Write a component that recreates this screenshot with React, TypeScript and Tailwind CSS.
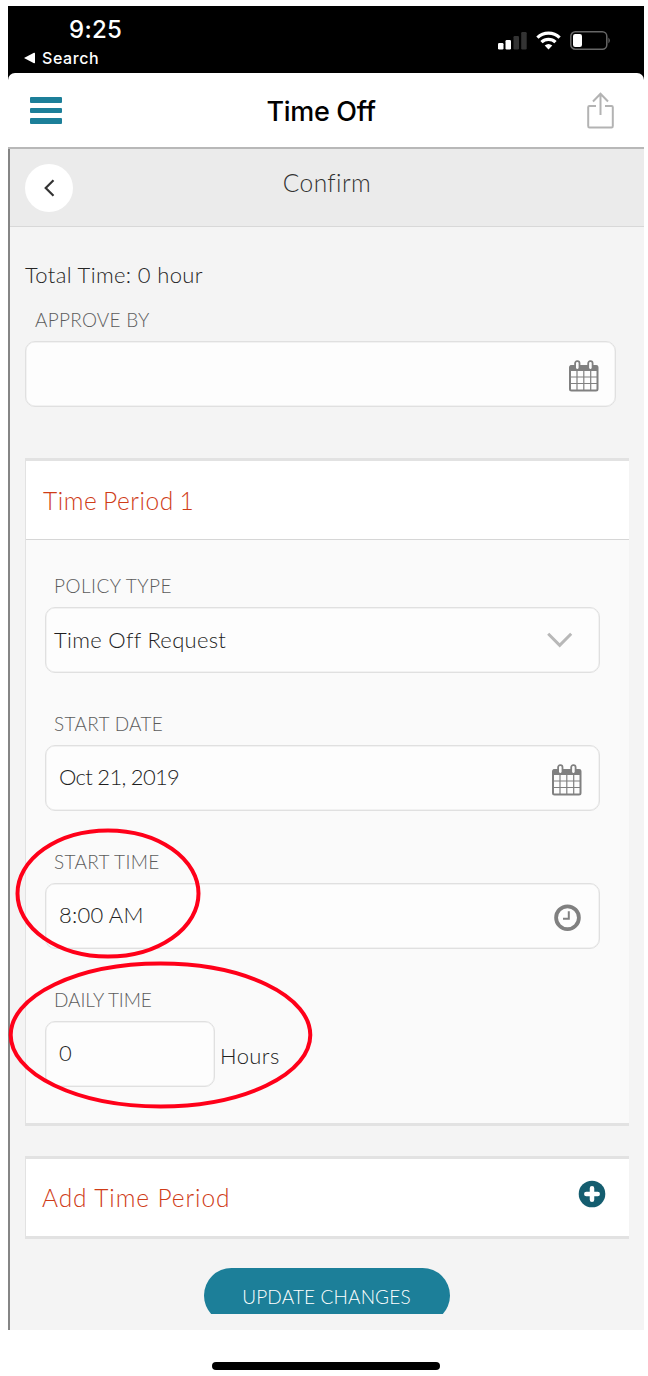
import React from "react";

const light = "font-['Lato','Open_Sans',sans-serif] font-light whitespace-nowrap";
const system = "font-['Inter','Liberation_Sans',sans-serif] font-medium whitespace-nowrap";

function Calendar() {
  return (
    <svg width="30" height="32" viewBox="0 0 30 32" fill="none">
      <rect x="1" y="6" width="27.500" height="24.5" rx="1.5" fill="#fdfdfd" stroke="#808080" strokeWidth="2" />
      <path d="M1 5.5h27.500v5.5H1z" fill="#808080" />
      <path d="M8 11v19M14.8 11v19M21.7 11v19M2 17h26M2 23.5h26" stroke="#808080" strokeWidth="1.2" />
      <rect x="6.1" y="1.2" width="4.4" height="8.6" rx="2" fill="#fdfdfd" stroke="#808080" strokeWidth="1.8" />
      <rect x="19.2" y="1.2" width="4.4" height="8.6" rx="2" fill="#fdfdfd" stroke="#808080" strokeWidth="1.8" />
    </svg>
  );
}

function Clock() {
  return (
    <svg width="28" height="28" viewBox="0 0 28 28" fill="none" stroke="#808080">
      <circle cx="13.5" cy="13.700" r="11.4" strokeWidth="3.8" />
      <path d="M14.8 7.2v7.600H9" strokeWidth="2" />
    </svg>
  );
}

function Chevron() {
  return (
    <svg width="26" height="16" viewBox="0 0 26 16" fill="none">
      <path d="M1.2 1.8 12.7 13.3 24.200 1.8" stroke="#b8b8b8" strokeWidth="3" />
    </svg>
  );
}

function Label({ children, spacing }: { children: string; spacing: string }) {
  return <div className={`${light} h-[21px] pl-[9px] text-[19px] leading-[20px] text-[#5c5c5c] ${spacing}`}>{children}</div>;
}

function Field({ children, className }: { children?: React.ReactNode; className: string }) {
  return (
    <div className={`flex h-[66px] items-center justify-between rounded-[10px] border border-[#e0e0e0] bg-[#fdfdfd] shadow-[inset_0_0_0_0.5px_#e8e8e8] ${className}`}>
      {children}
    </div>
  );
}

function Value({ children, spacing }: { children: string; spacing: string }) {
  return <span className={`${light} text-[22px] leading-6 text-[#1f1f1f] ${spacing}`}>{children}</span>;
}

function StatusBar() {
  return (
    <div className="flex h-[67px] justify-between text-white">
      <div className="pt-[11px]">
        <div className={`${system} pl-[61px] text-[24px] leading-[26px] tracking-[0.3px]`}>9:25</div>
        <div className="flex items-center gap-[7px] pt-[5px] pl-4">
          <svg width="11" height="12" viewBox="0 0 11 12">
            <path d="M0 6 10 .8Q11 .5 11 1.5v9Q11 11.500 10 11.200Z" fill="#fff" />
          </svg>
          <span className={`${system} text-[16px] leading-5 tracking-[0.6px]`}>Search</span>
        </div>
      </div>
      <div className="mt-[25px] flex h-[19px] items-end gap-[9px] pr-8">
        <svg width="29" height="19" viewBox="0 0 29 19">
          <rect x="0" y="12" width="5.500" height="6.500" rx="1.200" fill="#fff" />
          <rect x="7.500" y="9" width="5.500" height="9.500" rx="1.200" fill="#fff" />
          <rect x="15.500" y="5" width="5.500" height="13.500" rx="1.200" fill="#333" />
          <rect x="23.200" y="1" width="5.500" height="17.500" rx="1.200" fill="#333" />
        </svg>
        <svg width="25" height="19" viewBox="0 0 24 19" fill="none" stroke="#fff" strokeWidth="3.200">
          <path d="M.9 6.700A15.800 15.800 0 0 1 23.100 6.700" />
          <path d="M5 11.200A10 10 0 0 1 19 11.200" />
          <path d="M8.200 14.600Q12 11.300 15.800 14.600L12 18.500Z" fill="#fff" stroke="none" />
        </svg>
        <svg width="42" height="19" viewBox="0 0 42 19">
          <rect x=".8" y=".8" width="36" height="17.400" rx="4.500" fill="none" stroke="#666" strokeWidth="1.500" />
          <rect x="3" y="3" width="9" height="13" rx="2.200" fill="#fff" />
          <path d="M38.500 6.500Q41 9.500 38.500 12.500Z" fill="#777" />
        </svg>
      </div>
    </div>
  );
}

function Header() {
  return (
    <div className="grid h-[76px] grid-cols-[32px_1fr_27px] items-center rounded-t-[7px] border-b-2 border-[#b8b8b8] bg-white pr-[30px] pl-[22px]">
      <div className="flex w-8 flex-col gap-[5px]">
        <div className="h-1.5 rounded-[1px] bg-[#1c7f99]" />
        <div className="h-[5px] rounded-[1px] bg-[#1c7f99]" />
        <div className="h-1.5 rounded-[1px] bg-[#1c7f99]" />
      </div>
      <div className={`${system} pr-[7px] pt-[3px] text-center text-[27px] leading-8 tracking-[-0.3px] text-black`}>Time Off</div>
      <svg width="27" height="37" viewBox="0 0 27 37" fill="none" stroke="#b3b3b3" strokeWidth="2">
        <path d="M9 14H2.500Q1.200 14 1.200 15.300V34Q1.200 35.500 2.500 35.500H24.500Q25.800 35.500 25.800 34V15.300Q25.800 14 24.500 14H18" />
        <path d="M13.500 23V2M6 9.500 13.500 1.800 21 9.500" />
      </svg>
    </div>
  );
}

export default function App() {
  return (
    <div className="relative h-[1376px] w-[648px] overflow-hidden bg-white pt-1.5 pl-2">
      <div className="w-[636px]">
        <div className="bg-black">
          <StatusBar />
          <Header />
        </div>
        <div className="h-[1181px] border-l-2 border-[#858585] bg-[#f4f4f4]">
          <div className="grid h-[78px] grid-cols-[48px_1fr_48px] border-b border-[#d8d8d8] bg-[#ebebeb] px-[15px]">
            <div className="mt-[15px] flex size-12 items-center justify-center rounded-full bg-white">
              <svg width="12" height="18" viewBox="0 0 12 18" fill="none">
                <path d="M10.500 1.200 2.700 9 10.500 16.800" stroke="#333" strokeWidth="2.200" />
              </svg>
            </div>
            <div className={`${light} pt-5 text-center text-[24.500px] leading-7 tracking-[0.4px] text-[#333]`}>Confirm</div>
          </div>

          <div className="px-[15px] pt-9">
            <div className={`${light} text-[22px] leading-6 tracking-[0.36px] text-[#262626]`}>Total Time: 0 hour</div>
            <div className="pt-[23px] pl-px">
              <Label spacing="tracking-[0.25px]">APPROVE BY</Label>
            </div>
            <Field className="mt-[10px] w-[591px] pr-[16px]">
              <span className="ml-auto pt-1"><Calendar /></span>
            </Field>

            <section className="mt-[51px] h-[668px] w-[604px] border-y-[3px] border-l border-[#e2e2e2] bg-[#fafafa]">
              <div className="flex h-[79px] items-center border-b border-[#d6d6d6] bg-white pt-[2px] pl-[17px]">
                <h2 className={`${light} text-[24.500px] leading-7 tracking-[0.55px] text-[#cf3c17] [word-spacing:-1.5px]`}>Time Period 1</h2>
              </div>
              <div className="pt-[36px] pl-[19px]">
                <Label spacing="tracking-[0.45px]">POLICY TYPE</Label>
                <Field className="mt-[10px] w-[555px] pr-[26px] pl-[8px]">
                  <Value spacing="tracking-[0.3px]">Time Off Request</Value>
                  <Chevron />
                </Field>
                <div className="h-[41px]" />
                <Label spacing="tracking-[0.3px]">START DATE</Label>
                <Field className="mt-[10px] w-[555px] pr-[17px] pl-[13px]">
                  <Value spacing="pb-[2px] tracking-[-0.7px]">Oct 21, 2019</Value>
                  <span className="pt-1"><Calendar /></span>
                </Field>
                <div className="h-[41px]" />
                <Label spacing="tracking-[0.3px]">START TIME</Label>
                <Field className="mt-[10px] w-[555px] pr-[17px] pl-[13px]">
                  <Value spacing="pb-[2px] tracking-[0.2px]">8:00 AM</Value>
                  <span className="pt-1"><Clock /></span>
                </Field>
                <div className="h-[41px]" />
                <Label spacing="tracking-[-0.1px]">DAILY TIME</Label>
                <div className="mt-[10px] flex items-center gap-[5px]">
                  <Field className="w-[170px] pl-[13px]">
                    <Value spacing="pb-[2px] tracking-[0px]">0</Value>
                  </Field>
                  <span className="pt-[5px]"><Value spacing="tracking-[0.4px]">Hours</Value></span>
                </div>
              </div>
            </section>

            <section className="mt-[30px] flex h-[83px] w-[604px] items-center justify-between border-y-[3px] border-l border-[#e2e2e2] bg-white pr-[23px] pl-4">
              <h2 className={`${light} pt-px text-[24.500px] leading-7 tracking-[0.9px] text-[#cf3c17]`}>Add Time Period</h2>
              <svg className="-mt-[7px]" width="28" height="28" viewBox="0 0 28 28">
                <circle cx="14" cy="14" r="13.300" fill="#145d6f" />
                <path d="M14 8.300v11.400M8.300 14h11.400" stroke="#fff" strokeWidth="4.500" strokeLinecap="round" />
              </svg>
            </section>

            <div className="mt-[29px] ml-[179px] h-[46px] w-[246px] overflow-hidden">
              <div className={`${light} h-[55px] rounded-full bg-[#1c7f99] pt-[18px] pr-px text-center text-[19px] leading-[22px] tracking-[0.15px] text-white`}>UPDATE CHANGES</div>
            </div>
          </div>
        </div>
        <div className="mt-8 ml-[204px] h-2 w-[228px] rounded-full bg-black" />
      </div>
      <svg className="pointer-events-none absolute inset-0" width="648" height="1376" fill="none" stroke="#ff0019" strokeWidth="4">
        <ellipse cx="108" cy="893.500" rx="90.500" ry="63" />
        <ellipse cx="160.500" cy="1035" rx="149.800" ry="71.500" />
      </svg>
    </div>
  );
}
